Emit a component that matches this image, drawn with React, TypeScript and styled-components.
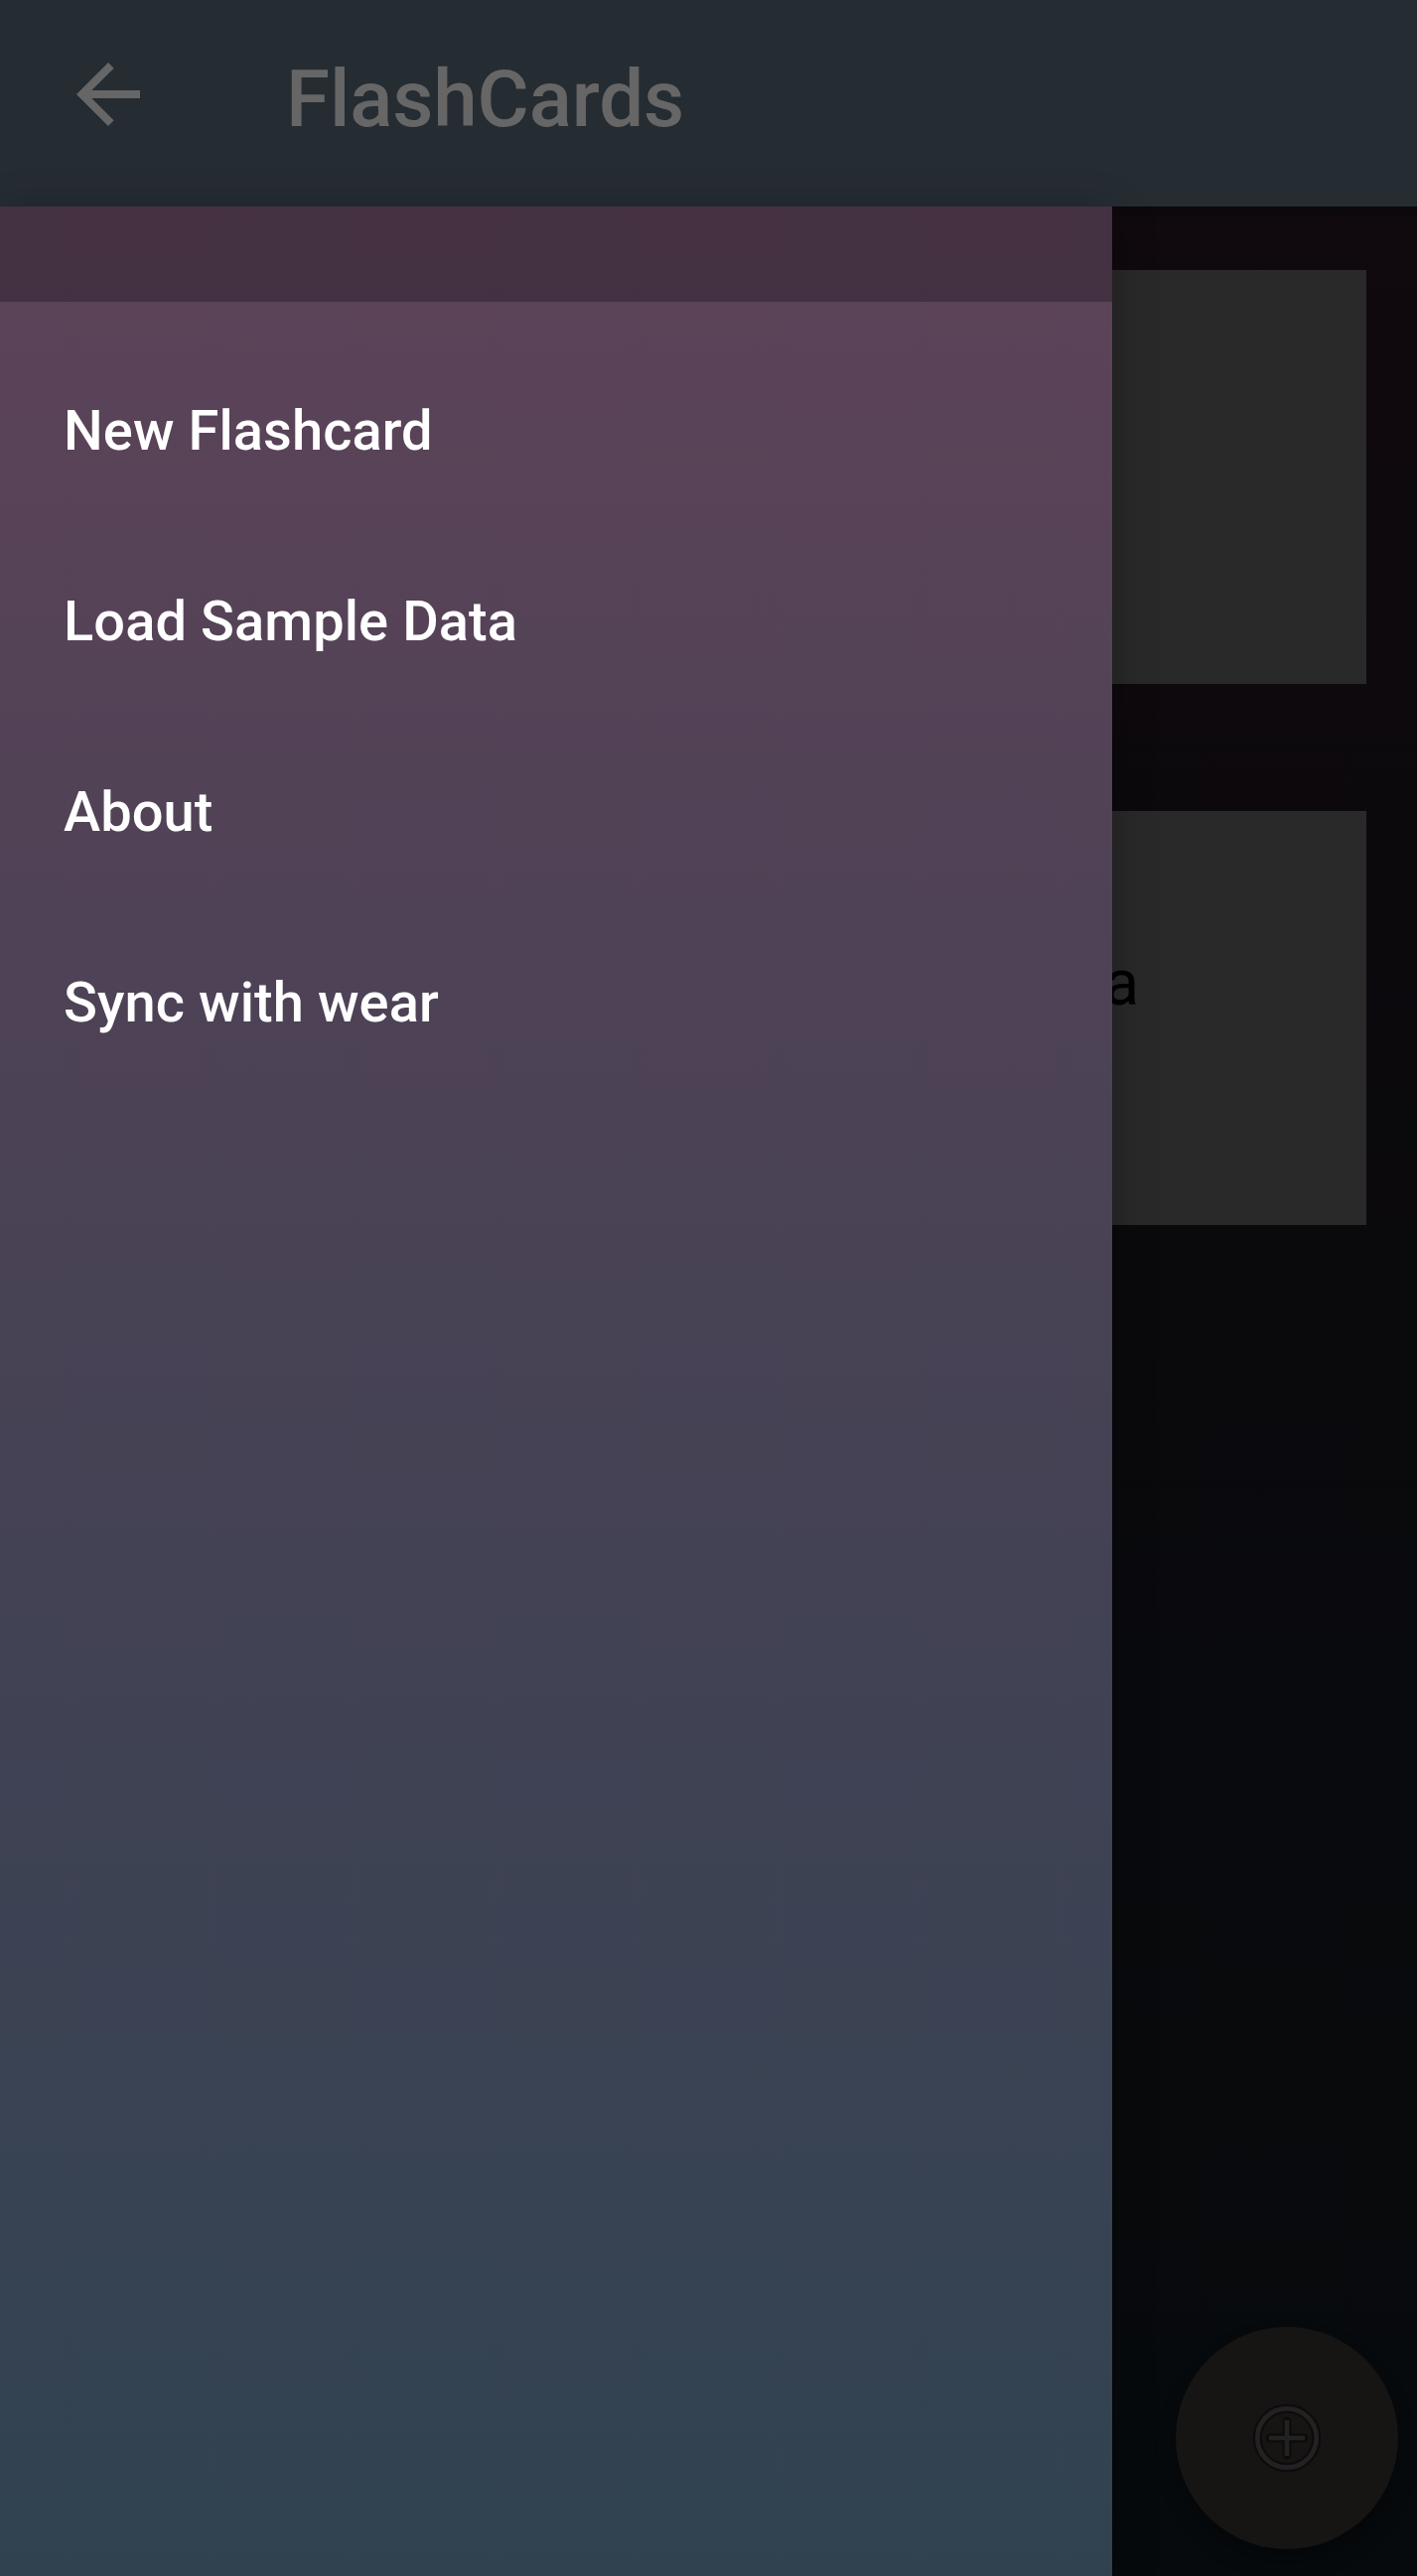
import React from 'react';
import styled, { createGlobalStyle } from 'styled-components';

const GlobalStyle = createGlobalStyle`
  html, body { margin: 0; padding: 0; background: #08090b; }
  * { box-sizing: border-box; }
`;

const Screen = styled.div`
  display: flex;
  flex-direction: column;
  width: 1427px;
  height: 2595px;
  overflow: hidden;
  font-family: Roboto, 'Liberation Sans', sans-serif;
`;

const AppBar = styled.header`
  display: flex;
  align-items: center;
  flex: none;
  height: 207.5px;
  padding: 0 0 18px 61px;
  background: #252c32;
  color: #666666;
`;

const BackButton = styled.button`
  display: flex;
  padding: 0;
  border: 0;
  background: none;
  color: inherit;
`;

const Title = styled.h1`
  margin: 10px 0 0 131px;
  font-size: 80px;
  line-height: 94px;
  font-weight: 500;
  letter-spacing: -0.12px;
`;

const Content = styled.main`
  position: relative;
  flex: 1;
  padding: 64px 51px 0;
  background:
    linear-gradient(rgba(6, 8, 9, 0.5), rgba(6, 8, 9, 0) 14px),
    linear-gradient(#10090d 0%, #0c090d 27%, #0a090c 46%, #090a0e 62%, #090a0c 80%, #070a0d 92%, #060a0d 100%);
`;

const CardList = styled.div`
  display: flex;
  flex-direction: column;
  gap: 128px;
`;

const Card = styled.article`
  display: flex;
  align-items: center;
  justify-content: flex-end;
  height: 417px;
  padding: 0 229px 69px 0;
  background: #292929;
  color: #000;
  font-size: 64px;
  line-height: 75px;
`;

const Drawer = styled.nav`
  position: absolute;
  top: 0;
  left: 0;
  bottom: 0;
  width: 1120px;
  background: linear-gradient(#5d4358 0%, #5b4358 5%, #504256 29%, #424254 59%, #364352 88%, #304250 100%);
  box-shadow: 0 8px 40px rgba(0, 0, 0, 0.26);
`;

const StatusStrip = styled.div`
  height: 96px;
  background: rgba(0, 0, 0, 0.26);
`;

const Menu = styled.ul`
  margin: 0;
  padding: 32px 0 0;
  list-style: none;
`;

const MenuItem = styled.li`
  display: flex;
  align-items: center;
  height: 192px;
  padding: 4px 64px 0;
  color: #fff;
  font-size: 56px;
  font-weight: 500;
  letter-spacing: 0.08px;
`;

const Fab = styled.button`
  position: absolute;
  right: 19px;
  bottom: 27.5px;
  display: flex;
  align-items: center;
  justify-content: center;
  width: 224px;
  height: 224px;
  padding: 0;
  border: 0;
  border-radius: 50%;
  background: #171513;
  box-shadow: 0 12px 20px rgba(0, 0, 0, 0.3);
`;

const ArrowIcon = () => (
  <svg width="96" height="96" viewBox="0 0 24 24" fill="currentColor">
    <path d="M20 11H7.83l5.59-5.59L12 4l-8 8 8 8 1.41-1.41L7.83 13H20v-2z" />
  </svg>
);

const AddIcon = () => (
  <svg width="80" height="80" viewBox="-40 -40 80 80" fill="none">
    <g stroke="#0d0c0b" strokeWidth="9" strokeLinecap="round">
      <circle r="29.7" />
      <path d="M-17 0H17M0 -17V17" />
    </g>
    <g stroke="#222123" strokeWidth="4.7">
      <circle r="29.7" />
      <path d="M-18 0H18M0 -18V18" />
    </g>
  </svg>
);

const menuItems = ['New Flashcard', 'Load Sample Data', 'About', 'Sync with wear'];
const cards = ['', 'a'];

export default function App() {
  return (
    <Screen>
      <GlobalStyle />
      <AppBar>
        <BackButton aria-label="Back"><ArrowIcon /></BackButton>
        <Title>FlashCards</Title>
      </AppBar>
      <Content>
        <CardList>
          {cards.map((text, i) => <Card key={i}>{text}</Card>)}
        </CardList>
        <Fab aria-label="Add"><AddIcon /></Fab>
        <Drawer>
          <StatusStrip />
          <Menu>
            {menuItems.map((label) => <MenuItem key={label}>{label}</MenuItem>)}
          </Menu>
        </Drawer>
      </Content>
    </Screen>
  );
}
